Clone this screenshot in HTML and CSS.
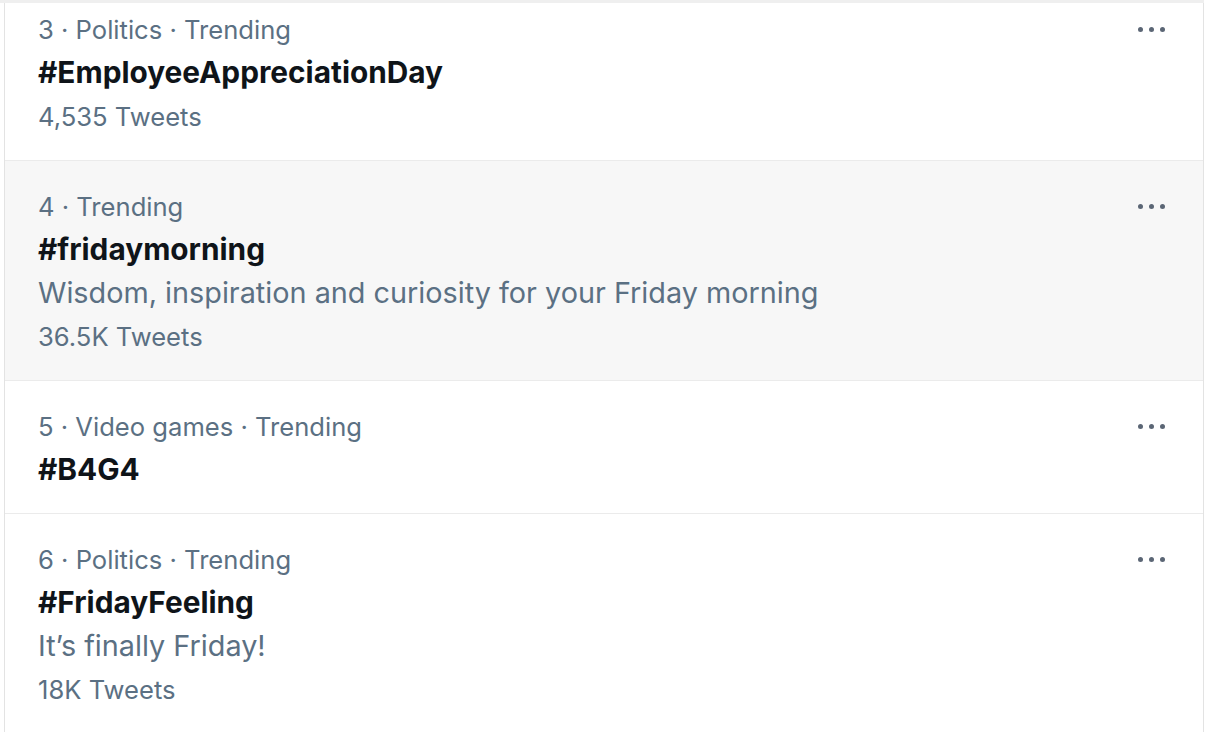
FILE: index.html
```html
<!DOCTYPE html>
<html lang="en">
<head>
<meta charset="utf-8">
<title>Trends</title>
<link rel="stylesheet" href="styles.css">
</head>
<body>
<div class="topedge"></div>
<div class="list">
  <div class="trend first">
    <div class="body">
      <div class="meta">3 · Politics · Trending</div>
      <div class="name">#EmployeeAppreciationDay</div>
      <div class="count">4,535 Tweets</div>
    </div>
    <div class="more"><span></span><span></span><span></span></div>
  </div>
  <div class="trend hover">
    <div class="body">
      <div class="meta">4 · Trending</div>
      <div class="name">#fridaymorning</div>
      <div class="desc">Wisdom, inspiration and curiosity for your Friday morning</div>
      <div class="count">36.5K Tweets</div>
    </div>
    <div class="more"><span></span><span></span><span></span></div>
  </div>
  <div class="trend">
    <div class="body">
      <div class="meta">5 · Video games · Trending</div>
      <div class="name">#B4G4</div>
    </div>
    <div class="more"><span></span><span></span><span></span></div>
  </div>
  <div class="trend">
    <div class="body">
      <div class="meta">6 · Politics · Trending</div>
      <div class="name">#FridayFeeling</div>
      <div class="desc">It’s finally Friday!</div>
      <div class="count">18K Tweets</div>
    </div>
    <div class="more"><span></span><span></span><span></span></div>
  </div>
</div>
</body>
</html>
```
FILE: styles.css
```css
html, body {
  margin: 0;
  padding: 0;
  background: #ffffff;
}
body {
  font-family: Inter, "Noto Sans", sans-serif;
  width: 1206px;
  height: 732px;
  overflow: hidden;
}
.topedge {
  height: 3px;
  background: #efefef;
  margin-right: 2px;
}
.list {
  margin: 0 2px 0 4px;
  border-left: 1px solid #e3e3e3;
  border-right: 1px solid #e3e3e3;
}
.trend {
  display: flex;
  align-items: flex-start;
  padding: 24px 38px 22px 33px;
  border-bottom: 1px solid #ebebeb;
}
.trend.first {
  padding-top: 5px;
}
.trend.hover {
  background: #f7f7f7;
}
.body {
  flex: 1;
  min-width: 0;
}
.meta, .count {
  font-size: 25.6px;
  line-height: 43px;
  color: #5b7083;
}
.count {
  margin-top: 1px;
}
.name {
  font-size: 29.8px;
  line-height: 43px;
  font-weight: 700;
  color: #0f1419;
}
.desc {
  font-size: 28.8px;
  line-height: 43px;
  color: #5b7083;
}
.more {
  display: flex;
  gap: 6px;
  height: 43px;
  align-items: center;
}
.more span {
  width: 5px;
  height: 5px;
  border-radius: 50%;
  background: #5b6675;
}
```
